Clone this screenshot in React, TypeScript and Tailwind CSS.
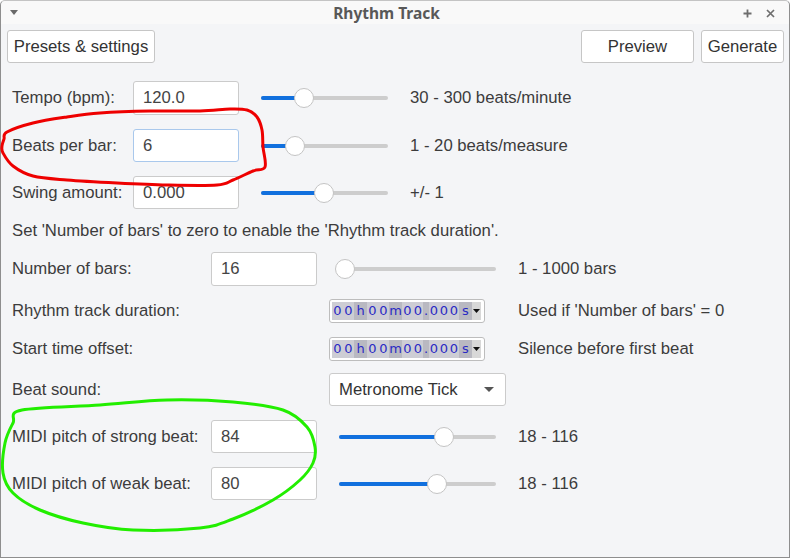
import React from "react";

type Pt = [number, number];

function smoothPath(pts: Pt[], closed = true): string {
  const p = closed ? [pts[pts.length - 1], ...pts, pts[0], pts[1]] : [pts[0], ...pts, pts[pts.length - 1]];
  let d = `M ${p[1][0]} ${p[1][1]}`;
  for (let i = 1; i < p.length - 2; i++) {
    const p0 = p[i - 1], p1 = p[i], p2 = p[i + 1], p3 = p[i + 2];
    const c1x = p1[0] + (p2[0] - p0[0]) / 6;
    const c1y = p1[1] + (p2[1] - p0[1]) / 6;
    const c2x = p2[0] - (p3[0] - p1[0]) / 6;
    const c2y = p2[1] - (p3[1] - p1[1]) / 6;
    d += ` C ${c1x} ${c1y} ${c2x} ${c2y} ${p2[0]} ${p2[1]}`;
  }
  return d;
}

const RED: Pt[] = [
  [7, 132], [33, 123], [67, 117], [100, 113], [150, 111], [200, 111], [230, 109], [247, 110],
  [257, 117], [262, 130], [263, 147], [265, 167], [253, 171], [233, 180], [217, 185], [167, 185],
  [117, 183], [67, 180], [33, 176], [13, 166], [3, 153], [2, 146], [4, 139],
];

const GREEN: Pt[] = [
  [22, 410], [100, 405], [167, 400], [233, 402], [283, 410], [307, 427], [315, 447], [313, 463],
  [300, 480], [273, 500], [233, 519], [200, 528], [133, 530], [83, 523], [40, 510], [13, 493],
  [3, 473], [5, 443], [13, 423],
];

function Slider({ w, thumb }: { w: string; thumb: number }) {
  return (
    <div className={`relative h-[20px] shrink-0 ${w}`}>
      <div className="absolute left-0 right-0 top-[8px] h-[4px] rounded-full bg-[#cdcdcd]" />
      <div className="absolute left-0 top-[8px] h-[4px] rounded-full bg-[#1170de]" style={{ width: thumb }} />
      <div
        className="absolute top-0 h-[20px] w-[20px] rounded-full bg-white border border-[#c4c4c4]"
        style={{ left: thumb - 10 }}
      />
    </div>
  );
}

function NumInput({ value, focused }: { value: string; focused?: boolean }) {
  return (
    <div
      className={`w-[106px] h-full shrink-0 bg-white rounded-[3px] border flex items-center pl-[9px] text-[#444] ${
        focused ? "border-[#a9c8ec]" : "border-[#cbcbcb]"
      }`}
    >
      {value}
    </div>
  );
}

function TimeCtrl() {
  const cells: [string, string][] = [
    ["0", "w-[11px]"], ["0", "w-[11px]"], ["h", "w-[13px]"], ["0", "w-[11px]"], ["0", "w-[11px]"],
    ["m", "w-[13px]"], ["0", "w-[11px]"], ["0", "w-[10px]"], [".", "w-[6px]"], ["0", "w-[10px]"],
    ["0", "w-[10px]"], ["0", "w-[10px]"], ["s", "w-[13px]"],
  ];
  return (
    <div className="w-[156px] h-full shrink-0 bg-white border border-[#bdbdbd] rounded-[3px] flex items-center px-[2px]">
      <div className="flex h-[18px] font-['DejaVu_Sans',sans-serif] text-[13px] text-[#2a2ac4]">
        {cells.map(([c, w], i) => (
          <div
            key={i}
            className={`${w} flex items-center justify-center ${
              c >= "0" && c <= "9" ? "bg-[#cdcdd4]" : "bg-[#b9b9c1]"
            }`}
          >
            {c}
          </div>
        ))}
      </div>
      <div className="w-[9px] h-[18px] flex items-center justify-center bg-[#d8d8d8]">
        <svg width="7" height="4" viewBox="0 0 7 4">
          <polygon points="0,0 7,0 3.5,4" fill="#111" />
        </svg>
      </div>
    </div>
  );
}

function Button({ label, w }: { label: string; w: string }) {
  return (
    <div
      className={`${w} h-full bg-white border border-[#c6c6c6] rounded-[3px] flex items-center justify-center text-[#333]`}
    >
      {label}
    </div>
  );
}

export default function App() {
  return (
    <div className="relative w-[791px] h-[558px] bg-white overflow-hidden font-['Liberation_Sans',Arial,sans-serif] text-[16.7px] text-[#3c3c3c]">
      <div className="w-[790px] h-[558px] flex flex-col bg-[#f4f5f7] border border-[#8e8e8e] border-t-[#c4c4c4] rounded-t-[5px]">
        {/* Title bar */}
        <div className="h-[23px] shrink-0 bg-[#f9f9f9] rounded-t-[5px] flex items-center px-[9px] relative">
          <svg width="8" height="5" viewBox="0 0 8 5">
            <polygon points="0,0 8,0 4,5" fill="#6a6a6a" />
          </svg>
          <div className="flex-1 text-center font-['Noto_Sans',sans-serif] font-bold text-[15.5px] text-[#585858] leading-none pt-[2px] pl-[12px]">
            Rhythm Track
          </div>
          <div className="flex items-center gap-[14px] pr-[5px] pt-[1px]">
            <svg width="9" height="9" viewBox="0 0 9 9">
              <path d="M4.5 0.5 V8.5 M0.5 4.5 H8.5" stroke="#6e6e6e" strokeWidth="1.8" />
            </svg>
            <svg width="9" height="9" viewBox="0 0 9 9">
              <path d="M1 1 L8 8 M8 1 L1 8" stroke="#6e6e6e" strokeWidth="1.7" />
            </svg>
          </div>
        </div>

        {/* Buttons */}
        <div className="mt-[6px] h-[33px] flex pl-[6px] pr-[5px]">
          <Button label="Presets & settings" w="w-[148px]" />
          <div className="flex-1" />
          <Button label="Preview" w="w-[113px]" />
          <div className="w-[7px]" />
          <Button label="Generate" w="w-[83px]" />
        </div>

        <div className="flex flex-col pl-[11px]">
          {/* Section 1 */}
          <div className="mt-[18px] h-[34px] flex items-center">
            <div className="w-[121px] shrink-0">Tempo (bpm):</div>
            <NumInput value="120.0" />
            <div className="ml-[22px]"><Slider w="w-[127px]" thumb={43} /></div>
            <div className="ml-[22px]">30 - 300 beats/minute</div>
          </div>
          <div className="mt-[14px] h-[33px] flex items-center">
            <div className="w-[121px] shrink-0">Beats per bar:</div>
            <NumInput value="6" focused />
            <div className="ml-[22px]"><Slider w="w-[127px]" thumb={34} /></div>
            <div className="ml-[22px]">1 - 20 beats/measure</div>
          </div>
          <div className="mt-[14px] h-[33px] flex items-center">
            <div className="w-[121px] shrink-0">Swing amount:</div>
            <NumInput value="0.000" />
            <div className="ml-[22px]"><Slider w="w-[127px]" thumb={63} /></div>
            <div className="ml-[22px]">+/- 1</div>
          </div>

          <div className="mt-[13px] h-[18px] flex items-center">
            Set 'Number of bars' to zero to enable the 'Rhythm track duration'.
          </div>

          {/* Section 2 */}
          <div className="mt-[12px] h-[34px] flex items-center">
            <div className="w-[199px] shrink-0">Number of bars:</div>
            <NumInput value="16" />
            <div className="ml-[22px]"><Slider w="w-[157px]" thumb={6} /></div>
            <div className="ml-[22px]">1 - 1000 bars</div>
          </div>
          <div className="mt-[13px] h-[24px] flex items-center">
            <div className="w-[317px] shrink-0">Rhythm track duration:</div>
            <TimeCtrl />
            <div className="ml-[33px]">Used if 'Number of bars' = 0</div>
          </div>
          <div className="mt-[14px] h-[24px] flex items-center">
            <div className="w-[317px] shrink-0">Start time offset:</div>
            <TimeCtrl />
            <div className="ml-[33px]">Silence before first beat</div>
          </div>
          <div className="mt-[12px] h-[33px] flex items-center">
            <div className="w-[317px] shrink-0">Beat sound:</div>
            <div className="w-[177px] h-full bg-white border border-[#cbcbcb] rounded-[3px] flex items-center pl-[9px] pr-[11px] text-[#333]">
              <div className="flex-1">Metronome Tick</div>
              <svg width="10" height="5" viewBox="0 0 10 5">
                <polygon points="0,0 10,0 5,5" fill="#555" />
              </svg>
            </div>
          </div>
          <div className="mt-[14px] h-[33px] flex items-center">
            <div className="w-[199px] shrink-0">MIDI pitch of strong beat:</div>
            <NumInput value="84" />
            <div className="ml-[22px]"><Slider w="w-[157px]" thumb={105} /></div>
            <div className="ml-[22px]">18 - 116</div>
          </div>
          <div className="mt-[14px] h-[33px] flex items-center">
            <div className="w-[199px] shrink-0">MIDI pitch of weak beat:</div>
            <NumInput value="80" />
            <div className="ml-[22px]"><Slider w="w-[157px]" thumb={98} /></div>
            <div className="ml-[22px]">18 - 116</div>
          </div>
        </div>
      </div>

      {/* Hand-drawn annotations */}
      <svg className="absolute left-0 top-0 pointer-events-none" width="791" height="558" viewBox="0 0 791 558">
        <path d={smoothPath(RED)} fill="none" stroke="#ee0000" strokeWidth="3" strokeLinejoin="round" />
        <path d={smoothPath(GREEN)} fill="none" stroke="#22ee00" strokeWidth="3" strokeLinejoin="round" />
      </svg>
    </div>
  );
}
